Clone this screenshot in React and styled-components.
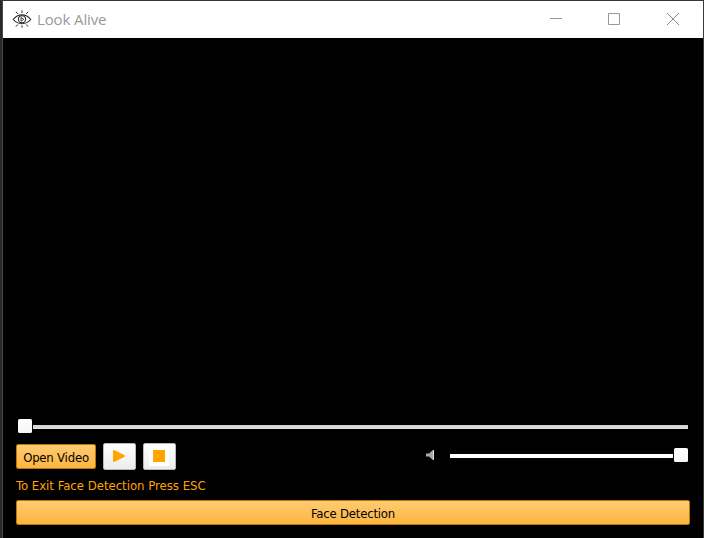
import React from "react";
import styled, { createGlobalStyle } from "styled-components";

const GlobalStyle = createGlobalStyle`
  *, *::before, *::after { box-sizing: border-box; }
  body { margin: 0; background: #000; overflow: hidden; }
`;

const Window = styled.main`
  display: flex;
  flex-direction: column;
  width: 704px;
  height: 538px;
  border-top: 1px solid #373737;
  border-right: 1px solid #3b3b3b;
  border-left: 2px solid #292929;
  background: #000;
  box-shadow: inset 1px 0 #484848;
  font-family: "DejaVu Sans Condensed", "DejaVu Sans", sans-serif;
  font-stretch: condensed;
  font-size: 13px;
`;

const TitleBar = styled.header`
  display: flex;
  align-items: center;
  height: 37px;
  margin-left: 1px;
  padding: 0 1px 2px 9px;
  background: #fff;
`;

const Title = styled.h1`
  flex: 1;
  margin: 0 0 0 5px;
  color: #999;
  font: 400 15px/20px "Open Sans", sans-serif;
  letter-spacing: -0.12px;
`;

const CaptionButton = styled.button`
  display: grid;
  place-items: center;
  width: 58.5px;
  height: 35px;
  padding: 0;
  border: 0;
  background: transparent;
`;

const VideoArea = styled.section`
  flex: 1;
`;

const Controls = styled.section`
  height: 119px;
  padding-left: 14px;
`;

const Slider = styled.div`
  display: flex;
  align-items: center;
  flex-direction: ${(p) => (p.$full ? "row-reverse" : "row")};
  gap: 1px;
  width: ${(p) => p.$width}px;
  height: 14px;
`;

const SeekSlider = styled(Slider)`
  margin-left: 2px;
`;

const VolumeSlider = styled(Slider)`
  margin: 0 15px 3px 15px;
`;

const Track = styled.div`
  flex: 1;
  height: 4px;
  margin-top: 2px;
  background: ${(p) => (p.$seek ? "linear-gradient(#d2ced2, #e2dfe2)" : "#fff")};
`;

const Handle = styled.div`
  width: 14px;
  height: 14px;
  border-radius: 1.5px;
  background: linear-gradient(#fff, #f5f5f5);
`;

const ControlRow = styled.div`
  display: flex;
  align-items: center;
  height: 27px;
  margin-top: 10px;
`;

const OrangeButton = styled.button`
  display: block;
  width: ${(p) => p.$width}px;
  height: 25px;
  padding: 2px 0 0;
  border: 1px solid #ba7709;
  border-radius: 2px;
  background: linear-gradient(#ffcb73, #fdb53f);
  color: #000;
  font: inherit;
  letter-spacing: -0.2px;
`;

const IconButton = styled.button`
  display: grid;
  place-items: center;
  width: 33px;
  height: 27px;
  margin-left: 7px;
  padding: 0 2px 2px 0;
  border: 1px solid #b9b9b9;
  border-radius: 2px;
  background: linear-gradient(#fff, #ececec);
`;

const VolumeIcon = styled.svg`
  margin: 0 0 3px auto;
`;

const Hint = styled.p`
  margin: 8px 0 7px;
  height: 15px;
  line-height: 15px;
  color: #ffa500;
`;

function EyeIcon() {
  return (
    <svg width="20" height="20" viewBox="0 0 20 20" fill="none" stroke="#2c2c2c" strokeWidth="1.1">
      <path d="M1.2 10.5C4 6.8 7 5.9 10 5.9s6 .9 8.8 4.6c-2.8 3.2-5.8 4.2-8.8 4.2s-6-1-8.8-4.2Z" />
      <circle cx="10" cy="10.3" r="3.6" />
      <path d="m9 8.4 2.8 1.9L9 12.2Z" strokeWidth=".9" />
      <path d="M10 1.4v2.7M4 2.8l1.7 2.1M16 2.8l-1.7 2.1M10 16.4v2.3M4 17.6l1.7-2.1M16 17.6l-1.7-2.1" strokeWidth="1" />
    </svg>
  );
}

export default function App() {
  return (
    <>
      <GlobalStyle />
      <Window>
        <TitleBar>
          <EyeIcon />
          <Title>Look Alive</Title>
          <CaptionButton aria-label="Minimize">
            <svg width="12" height="12"><path d="M0 5.5h12" stroke="#999" /></svg>
          </CaptionButton>
          <CaptionButton aria-label="Maximize">
            <svg width="12" height="12"><path d="M.5.5h11v11H.5Z" fill="none" stroke="#999" /></svg>
          </CaptionButton>
          <CaptionButton aria-label="Close">
            <svg width="12" height="12"><path d="m0 0 12 12M12 0 0 12" stroke="#888" /></svg>
          </CaptionButton>
        </TitleBar>
        <VideoArea />
        <Controls>
          <SeekSlider $width={670}>
            <Handle />
            <Track $seek />
          </SeekSlider>
          <ControlRow>
            <OrangeButton $width={80}>Open Video</OrangeButton>
            <IconButton aria-label="Play">
              <svg width="16" height="16"><path d="M2 3Q2 1.6 3.2 2.1L13.6 7.3q1 .7 0 1.4L3.2 13.9Q2 14.3 2 13Z" fill="orange" /></svg>
            </IconButton>
            <IconButton aria-label="Stop">
              <svg width="20" height="20"><path d="M0 0h20v20H0Z" fill="#fff" /><path d="M4 4h12v12H4Z" fill="orange" /></svg>
            </IconButton>
            <VolumeIcon width="9" height="10">
              <path d="M0 3.5h3L7 0h1v10H7L3 6.5H0Z" fill="#aaa7aa" />
              <path d="M7.5 0v10" stroke="#dedede" />
            </VolumeIcon>
            <VolumeSlider $width={238} $full>
              <Handle />
              <Track />
            </VolumeSlider>
          </ControlRow>
          <Hint>To Exit Face Detection Press ESC</Hint>
          <OrangeButton $width={674}>Face Detection</OrangeButton>
        </Controls>
      </Window>
    </>
  );
}
